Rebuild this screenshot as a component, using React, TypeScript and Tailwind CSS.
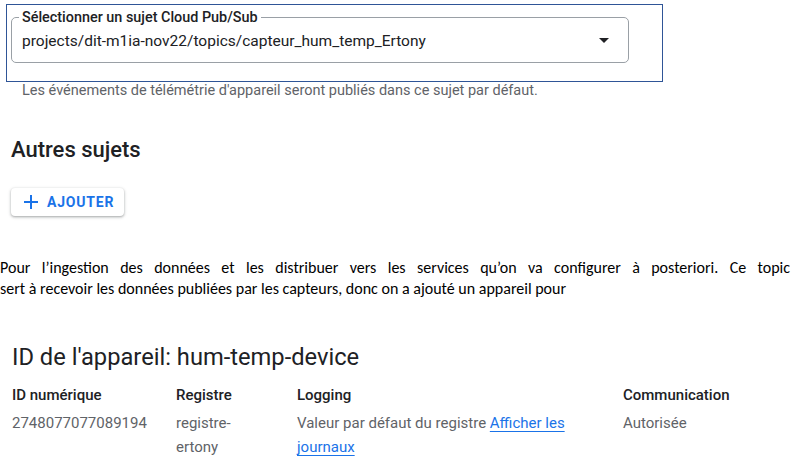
export default function App() {
  return (
    <div className="w-[795px] h-[468px] overflow-hidden bg-white font-['Roboto',sans-serif] text-[#202124]">
      {/* selected topic, framed in blue */}
      <div className="pt-[4px] pl-[6px]">
        <div className="w-[657px] h-[78px] border-[1.5px] border-[#2f5597] pt-[6px] pl-[4px]">
          <fieldset className="w-[618px] rounded-[5px] border border-[#9aa0a6] pl-[7px] pr-[12px]">
            <legend className="px-[3px] text-[14.4px] leading-[13px] font-medium">
              Sélectionner un sujet Cloud Pub/Sub
            </legend>
            <div className="flex items-center justify-between pl-[3px] pt-[6px] pb-[10px]">
              <span className="text-[15.5px] leading-[20px]">
                projects/dit-m1ia-nov22/topics/capteur_hum_temp_Ertony
              </span>
              <svg width="24" height="24" viewBox="0 0 24 24" className="-mt-[2px]">
                <path d="M7 10l5 5 5-5z" fill="#202124" />
              </svg>
            </div>
          </fieldset>
        </div>
      </div>
      <p className="mt-[1px] pl-[22px] text-[14.5px] leading-[16px] text-[#5f6368]">
        Les événements de télémétrie d'appareil seront publiés dans ce sujet par défaut.
      </p>

      <h2 className="mt-[37px] pl-[11px] text-[22px] leading-[28px] font-medium">Autres sujets</h2>

      <div className="mt-[24px] pl-[11px]">
        <button className="inline-flex h-[28px] items-center gap-[4px] rounded-[4px] bg-white pl-[8px] pr-[10px] text-[14px] font-bold tracking-[0.8px] text-[#1a73e8] shadow-[0_1px_2px_rgba(60,64,67,0.3),0_1px_3px_1px_rgba(60,64,67,0.15)]">
          <svg width="24" height="24" viewBox="0 0 24 24">
            <path d="M19 13h-6v6h-2v-6H5v-2h6V5h2v6h6v2z" fill="#1a73e8" />
          </svg>
          AJOUTER
        </button>
      </div>

      {/* justified word paragraph */}
      <div className="mt-[36px] w-[790px] font-['Carlito','Lato',sans-serif] text-[16px] leading-[21px] text-black">
        <p className="text-justify [text-align-last:justify]">
          Pour l’ingestion des données et les distribuer vers les services qu’on va configurer à posteriori. Ce topic
        </p>
        <p>sert à recevoir les données publiées par les capteurs, donc on a ajouté un appareil pour</p>
      </div>

      <h2 className="mt-[42px] pl-[12px] text-[23.7px] leading-[32px]">ID de l'appareil: hum-temp-device</h2>

      <div className="mt-[12px] grid grid-cols-[164px_121px_326px_1fr] gap-y-[6px] pl-[12px]">
        <div className="text-[15px] leading-[20px] font-medium">ID numérique</div>
        <div className="text-[15px] leading-[20px] font-medium">Registre</div>
        <div className="text-[15px] leading-[20px] font-medium">Logging</div>
        <div className="text-[15px] leading-[20px] font-medium">Communication</div>

        <div className="text-[15px] leading-[24px] text-[#5f6368]">2748077077089194</div>
        <div className="max-w-[95px] text-[15px] leading-[24px] text-[#5f6368]">registre-ertony</div>
        <div className="max-w-[290px] text-[15px] leading-[24px] text-[#5f6368]">
          Valeur par défaut du registre{' '}
          <a className="text-[#1a73e8] underline decoration-[1px] underline-offset-[3px]">Afficher les journaux</a>
        </div>
        <div className="text-[15px] leading-[24px] text-[#5f6368]">Autorisée</div>
      </div>
    </div>
  );
}
